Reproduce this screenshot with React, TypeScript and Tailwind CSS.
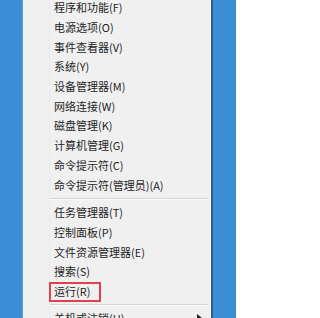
import React from "react";

const group1 = [
  "程序和功能(F)",
  "电源选项(O)",
  "事件查看器(V)",
  "系统(Y)",
  "设备管理器(M)",
  "网络连接(W)",
  "磁盘管理(K)",
  "计算机管理(G)",
  "命令提示符(C)",
  "命令提示符(管理员)(A)",
];

const group2 = ["任务管理器(T)", "控制面板(P)", "文件资源管理器(E)", "搜索(S)"];

function Row({ label, boxed }: { label: string; boxed?: boolean }) {
  return (
    <div className="h-[19.7px] flex items-center pl-[31px] shrink-0 relative">
      {boxed && (
        <div className="absolute left-[26px] top-0 w-[52px] h-[20px] border-2 border-[#e2404c]" />
      )}
      <span className="text-[11px] leading-none text-[#1e1e1e] whitespace-nowrap">{label}</span>
    </div>
  );
}

function Sep({ h }: { h: string }) {
  return (
    <div className={`${h} flex flex-col justify-center pl-[27px] pr-[2px] shrink-0`}>
      <div className="h-px bg-[#d4d4d4]" />
      <div className="h-px bg-[#fbfbfb]" />
    </div>
  );
}

export default function App() {
  return (
    <div
      className="w-[236px] h-[318px] bg-[#3b8dd5] overflow-hidden flex"
      style={{ fontFamily: '"Noto Sans CJK SC", "Noto Sans", sans-serif' }}
    >
      <div className="w-[22px] shrink-0" />
      <div className="w-px bg-[#5aa0dc] shrink-0" />
      <div className="w-[187px] shrink-0 bg-[#f0f0f0] h-full relative overflow-hidden">
        <div className="absolute left-[26px] top-0 bottom-0 w-px bg-[#e9e9e9]" />
        <div className="flex flex-col -mt-[2px] relative">
          {group1.map((l) => (
            <Row key={l} label={l} />
          ))}
          <Sep h="h-[8px]" />
          {group2.map((l) => (
            <Row key={l} label={l} />
          ))}
          <Row label="运行(R)" boxed />
          <Sep h="h-[7px]" />
          <div className="h-[19.7px] flex items-center pl-[31px] pr-[8px] shrink-0 justify-between">
            <span className="text-[11px] leading-none text-[#1e1e1e] whitespace-nowrap">关机或注销(U)</span>
            <svg width="5" height="8" viewBox="0 0 5 8">
              <path d="M0 0 L5 4 L0 8 Z" fill="#222" />
            </svg>
          </div>
        </div>
      </div>
      <div className="w-px bg-[#fafafa] shrink-0" />
      <div className="w-[2px] bg-[#2c5f8e] shrink-0" />
    </div>
  );
}
